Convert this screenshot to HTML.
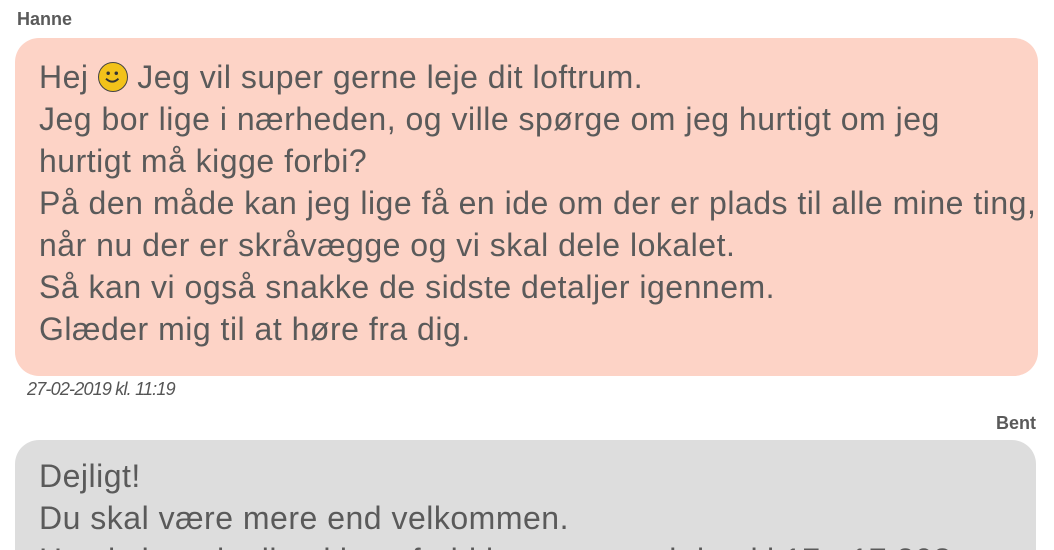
<!DOCTYPE html>
<html><head><meta charset="utf-8"><style>
html,body{margin:0;width:1054px;height:550px;overflow:hidden;}
body{background:#fff;font-family:"Liberation Sans",sans-serif;color:#555;position:relative}
.name{position:absolute;font-weight:bold;font-size:18px;color:#5a5a5a;}
.bub{position:absolute;left:15px;border-radius:24px;padding:18px 0 0 24px;box-sizing:border-box;font-size:32px;line-height:42px;white-space:nowrap;color:#5a5a5a;letter-spacing:0.5px;overflow:hidden}
.date{position:absolute;left:27px;top:379px;font-style:italic;font-size:18px;color:#555;letter-spacing:-0.8px}
.sm{display:inline-block;width:30px;height:30px;border-radius:50%;background:#f2c21a;border:1.5px solid #444;box-sizing:border-box;vertical-align:-4px;position:relative}
</style></head><body>
<div class="name" style="left:17px;top:9px">Hanne</div>
<div class="bub" style="top:38px;width:1023px;height:338px;background:#fdd3c6">Hej <span class="sm"><svg width="27" height="27" viewBox="0 0 25 25" style="position:absolute;left:0;top:0"><circle cx="8.5" cy="9.5" r="1.6" fill="#333"/><circle cx="16" cy="9.5" r="1.6" fill="#333"/><path d="M6.5 14.5 Q12.3 20 18 14.5" stroke="#333" stroke-width="1.8" fill="none"/></svg></span> Jeg vil super gerne leje dit loftrum.<br>Jeg bor lige i nærheden, og ville spørge om jeg hurtigt om jeg<br>hurtigt må kigge forbi?<br>På den måde kan jeg lige få en ide om der er plads til alle mine ting,<br>når nu der er skråvægge og vi skal dele lokalet.<br>Så kan vi også snakke de sidste detaljer igennem.<br>Glæder mig til at høre fra dig.</div>
<div class="date">27-02-2019 kl. 11:19</div>
<div class="name" style="right:18px;top:413px">Bent</div>
<div class="bub" style="top:440px;width:1021px;height:110px;padding-top:15px;border-radius:24px 24px 0 0;background:#dddddd">Dejligt!<br>Du skal være mere end velkommen.<br>Hvad siger du til at kigge forbi i morgen omkring kl 17 - 17:30?</div>
</body></html>
